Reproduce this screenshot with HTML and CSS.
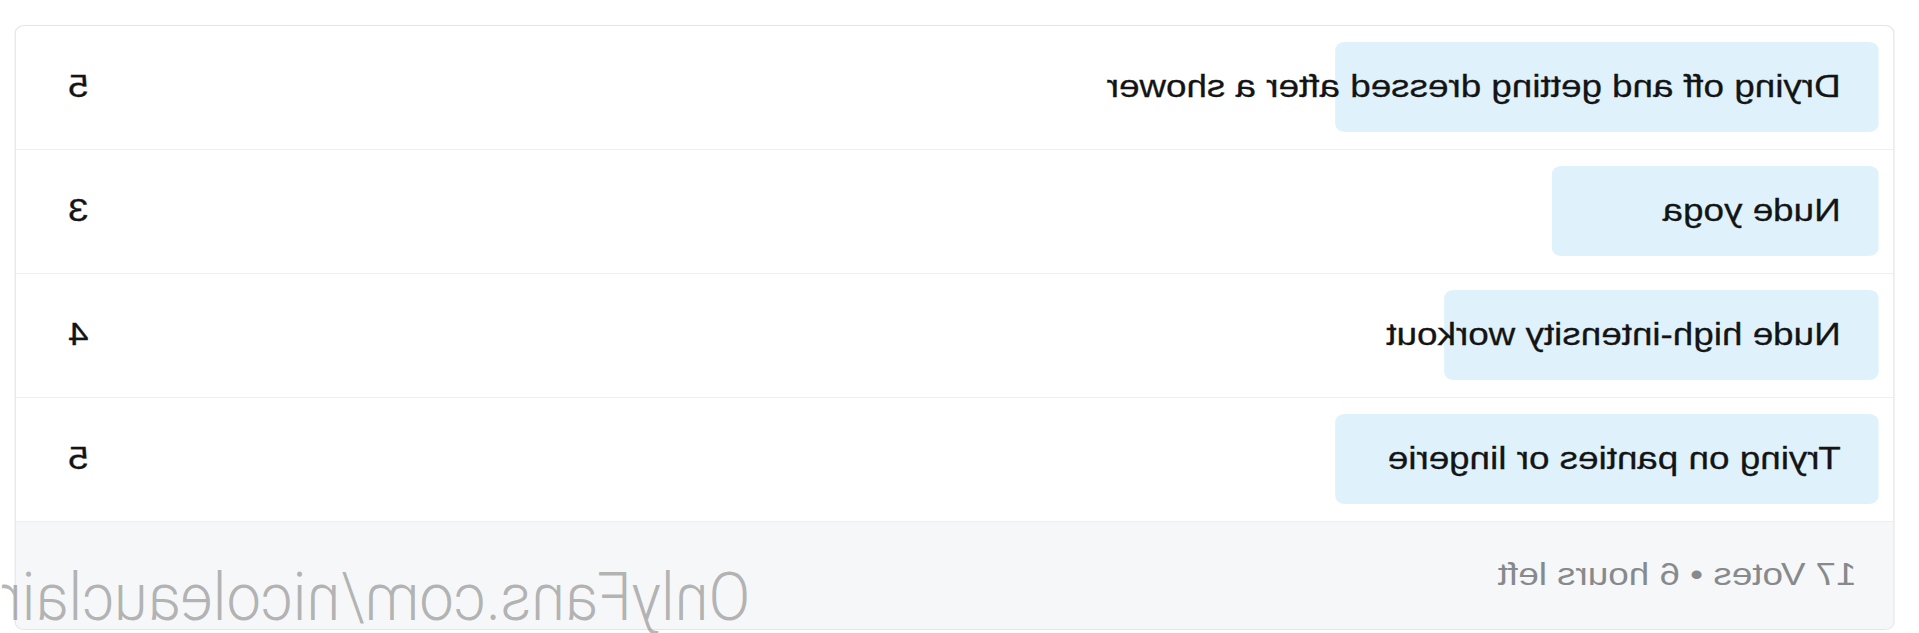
FILE: index.html
```html
<!DOCTYPE html>
<html lang="en">

<head>
    <meta charset="UTF-8">
    <meta name="viewport" content="width=device-width, initial-scale=1.0">
    <title>Poll Results</title>
    <link rel="stylesheet" href="styles.css">
</head>

<body>
    <div class="page">
        <div class="poll">
            <!-- Poll options, bar width = share of votes -->
            <div class="option">
                <div class="option-inner">
                    <div class="bar" style="width: 29.41%"></div>
                    <div class="option-content">
                        <span class="label">Drying off and getting dressed after a shower</span>
                        <span class="count">5</span>
                    </div>
                </div>
            </div>
            <div class="option">
                <div class="option-inner">
                    <div class="bar" style="width: 17.65%"></div>
                    <div class="option-content">
                        <span class="label">Nude yoga</span>
                        <span class="count">3</span>
                    </div>
                </div>
            </div>
            <div class="option">
                <div class="option-inner">
                    <div class="bar" style="width: 23.53%"></div>
                    <div class="option-content">
                        <span class="label">Nude high-intensity workout</span>
                        <span class="count">4</span>
                    </div>
                </div>
            </div>
            <div class="option">
                <div class="option-inner">
                    <div class="bar" style="width: 29.41%"></div>
                    <div class="option-content">
                        <span class="label">Trying on panties or lingerie</span>
                        <span class="count">5</span>
                    </div>
                </div>
            </div>

            <div class="poll-footer">
                <span class="meta">17 Votes • 6 hours left</span>
            </div>
        </div>

        <div class="watermark">OnlyFans.com/nicoleauclair</div>
    </div>
</body>

</html>
```

FILE: styles.css
```css
* {
    margin: 0;
    padding: 0;
    box-sizing: border-box;
}

body {
    font-family: "Liberation Sans", Arial, sans-serif;
    background: #ffffff;
    width: 1919px;
    height: 633px;
    overflow: hidden;
}

/* the shot is mirrored and stretched sideways */
.page {
    position: relative;
    width: 1568px;
    height: 633px;
    padding: 25px 12px 0 20px;
    transform-origin: 0 0;
    transform: matrix(-1.2239, 0, 0, 1, 1919, 0);
}

.poll {
    width: 1536px;
    border: 1px solid #e3e5e7;
    border-radius: 8px;
    overflow: hidden;
    background: #ffffff;
}

.option {
    padding: 16px 12px 17px;
    border-bottom: 1px solid #edeff1;
}

.option-inner {
    display: grid;
}

.bar {
    grid-area: 1 / 1;
    height: 90px;
    background: #dff2fc;
    border-radius: 8px;
}

.option-content {
    grid-area: 1 / 1;
    display: flex;
    align-items: center;
    justify-content: space-between;
    padding: 0 30px 2px 31px;
    color: #141415;
    -webkit-text-stroke: 0.3px #141415;
}

.label,
.count,
.meta {
    display: inline-block;
    font-size: 32px;
    white-space: nowrap;
    transform: scaleX(0.94);
}

.label,
.meta {
    transform-origin: 0 50%;
}

.poll-footer {
    height: 107px;
    display: flex;
    align-items: center;
    padding: 0 30px 2px;
    background: #f6f7f8;
    color: #878a8c;
}

.watermark {
    position: absolute;
    left: 955px;
    top: 564px;
    font-family: Roboto, sans-serif;
    font-weight: 300;
    font-size: 67px;
    line-height: 1;
    white-space: nowrap;
    color: rgba(120, 120, 120, 0.55);
    transform-origin: 0 0;
    transform: scaleX(0.75);
}
```
